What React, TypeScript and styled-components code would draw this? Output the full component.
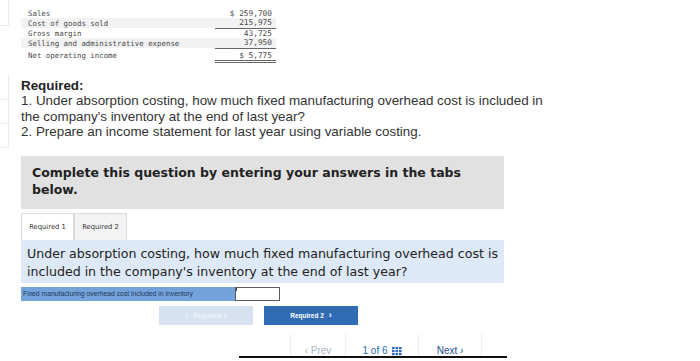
import React from 'react';
import styled, { createGlobalStyle } from 'styled-components';

const GlobalStyle = createGlobalStyle`
  html, body {
    margin: 0;
    padding: 0;
    background: #fff;
    overflow: hidden;
  }
`;

const Page = styled.div`
  display: flex;
  width: 700px;
  height: 361px;
  overflow: hidden;
`;

const Rail = styled.div`
  width: 9px;
  display: flex;
  flex-direction: column;
  flex-shrink: 0;
`;

const RailCell = styled.div<{ $h: number; $line?: boolean }>`
  height: ${(p) => p.$h}px;
  border-right: 1px solid ${(p) => (p.$line ? '#ececec' : 'transparent')};
  border-bottom: 1px solid ${(p) => (p.$line ? '#ececec' : 'transparent')};
`;

const Main = styled.div`
  flex: 1;
  padding-left: 12px;
  display: flex;
  flex-direction: column;
`;

const Statement = styled.table`
  width: 255px;
  margin-top: 8px;
  border-collapse: collapse;
  font-family: 'DejaVu Sans Mono', monospace;
  font-size: 7.4px;
  color: #4a4a4a;
`;

const Row = styled.tr<{ $shaded?: boolean }>`
  background: ${(p) => (p.$shaded ? '#f2f2f2' : 'transparent')};
  height: 10px;
`;

const TotalRow = styled.tr`
  height: 13px;
  td {
    padding-top: 2px;
  }
`;

const Label = styled.td`
  padding: 0 0 0 7px;
  line-height: 9px;
`;

const Amount = styled.td<{ $rule?: 'single' | 'double' }>`
  width: 57px;
  padding: 0 4px 0 0;
  text-align: right;
  line-height: 9px;
  font-size: 7.8px;
  border-bottom: ${(p) =>
    p.$rule === 'single' ? '1px solid #666' : p.$rule === 'double' ? '3px double #666' : 'none'};
`;

const Required = styled.div`
  margin-top: 15px;
  font-family: 'Liberation Sans', Arial, sans-serif;
  font-size: 13.4px;
  line-height: 15.5px;
  color: #333;
`;

const RequiredTitle = styled.div`
  font-weight: bold;
  color: #222;
`;

const Instruction = styled.div`
  margin-top: 16px;
  width: 483px;
  height: 53px;
  box-sizing: border-box;
  padding: 8px 11px;
  background: #e1e1e1;
  font-family: 'DejaVu Sans', Verdana, sans-serif;
  font-weight: bold;
  font-size: 12.5px;
  line-height: 17px;
  color: #222;
`;

const Tabs = styled.div`
  display: flex;
  margin-top: 4px;
  height: 27px;
`;

const Tab = styled.div<{ $active?: boolean }>`
  width: 53px;
  box-sizing: border-box;
  display: flex;
  align-items: center;
  justify-content: center;
  border: 1px solid #dcdcdc;
  border-bottom: none;
  background: ${(p) => (p.$active ? '#fff' : '#f3f3f3')};
  font-family: 'DejaVu Sans', Verdana, sans-serif;
  font-size: 6.8px;
  color: #333;
`;

const Question = styled.div`
  width: 483px;
  height: 43px;
  box-sizing: border-box;
  padding: 5px 6px;
  background: #dde9f6;
  font-family: 'DejaVu Sans', Verdana, sans-serif;
  font-size: 12.6px;
  line-height: 18px;
  color: #222;
`;

const AnswerRow = styled.div`
  display: flex;
  margin-top: 4px;
  height: 14px;
`;

const AnswerLabel = styled.div`
  width: 214px;
  box-sizing: border-box;
  padding-left: 2px;
  display: flex;
  align-items: center;
  background: #74a3dc;
  font-family: 'Liberation Sans', Arial, sans-serif;
  font-size: 6.8px;
  color: #23395a;
`;

const AnswerInput = styled.div`
  position: relative;
  width: 45px;
  box-sizing: border-box;
  border: 1px solid #5a5a5a;
  background: #fff;

  &::before {
    content: '';
    position: absolute;
    left: 0;
    top: 0;
    width: 1px;
    height: 3px;
    background: #444;
  }
`;

const ButtonRow = styled.div`
  display: flex;
  justify-content: center;
  gap: 11px;
  width: 483px;
  padding-right: 8px;
  box-sizing: border-box;
  margin-top: 5px;
`;

const NavButton = styled.div<{ $disabled?: boolean }>`
  width: 94px;
  height: 19px;
  display: flex;
  align-items: center;
  justify-content: center;
  gap: 5px;
  background: ${(p) => (p.$disabled ? '#d6e2f0' : '#2f6cb4')};
  color: ${(p) => (p.$disabled ? '#eef3f9' : '#fff')};
  font-family: 'Liberation Sans', Arial, sans-serif;
  font-weight: bold;
  font-size: 6.5px;
`;

const Chevron = styled.span`
  font-size: 9px;
  font-weight: bold;
`;

const Footer = styled.div`
  margin-top: 9px;
  margin-left: 218px;
  width: 268px;
  height: 22px;
  display: flex;
  border-bottom: 2px solid #111;
`;

const Pager = styled.div<{ $w: number; $color: string; $line?: boolean }>`
  width: ${(p) => p.$w}px;
  box-sizing: border-box;
  display: flex;
  align-items: flex-end;
  justify-content: center;
  gap: 4px;
  padding-bottom: 0;
  border-right: 1px solid ${(p) => (p.$line ? '#eeeeee' : 'transparent')};
  font-family: 'Liberation Sans', Arial, sans-serif;
  font-size: 10px;
  line-height: 10px;
  color: ${(p) => p.$color};
  white-space: nowrap;
`;

const GridIcon = () => (
  <svg width="10" height="9" viewBox="0 0 10 9">
    {[0, 1, 2].map((r) =>
      [0, 1, 2].map((c) => (
        <rect key={`${r}-${c}`} x={c * 3.5} y={r * 3} width="2.6" height="2.2" fill="#2d6cc0" />
      ))
    )}
  </svg>
);

const rows = [
  { label: 'Sales', value: '$ 259,700' },
  { label: 'Cost of goods sold', value: '215,975', shaded: true, rule: 'single' as const },
  { label: 'Gross margin', value: '43,725' },
  { label: 'Selling and administrative expense', value: '37,950', shaded: true, rule: 'single' as const },
];

export default function App() {
  return (
    <Page>
      <GlobalStyle />
      <Rail>
        <RailCell $h={25} $line />
        <RailCell $h={48} />
        <RailCell $h={24} $line />
        <RailCell $h={23} $line />
        <RailCell $h={23} $line />
      </Rail>
      <Main>
        <Statement>
          <tbody>
            {rows.map((r) => (
              <Row key={r.label} $shaded={r.shaded}>
                <Label>{r.label}</Label>
                <Amount $rule={r.rule}>{r.value}</Amount>
              </Row>
            ))}
            <TotalRow>
              <Label>Net operating income</Label>
              <Amount $rule="double">$ 5,775</Amount>
            </TotalRow>
          </tbody>
        </Statement>

        <Required>
          <RequiredTitle>Required:</RequiredTitle>
          <div>1. Under absorption costing, how much fixed manufacturing overhead cost is included in</div>
          <div>the company's inventory at the end of last year?</div>
          <div>2. Prepare an income statement for last year using variable costing.</div>
        </Required>

        <Instruction>Complete this question by entering your answers in the tabs below.</Instruction>

        <Tabs>
          <Tab $active>Required 1</Tab>
          <Tab>Required 2</Tab>
        </Tabs>

        <Question>
          Under absorption costing, how much fixed manufacturing overhead cost is included in the
          company's inventory at the end of last year?
        </Question>

        <AnswerRow>
          <AnswerLabel>Fixed manufacturing overhead cost included in inventory</AnswerLabel>
          <AnswerInput />
        </AnswerRow>

        <ButtonRow>
          <NavButton $disabled>
            <Chevron>‹</Chevron>Required 1
          </NavButton>
          <NavButton>
            Required 2<Chevron>›</Chevron>
          </NavButton>
        </ButtonRow>

        <Footer>
          <Pager $w={52} $color="#fff" $line />
          <Pager $w={55} $color="#a9b7c6" $line>
            ‹ Prev
          </Pager>
          <Pager $w={73} $color="#2a6ab8" $line>
            1 of 6 <GridIcon />
          </Pager>
          <Pager $w={63} $color="#1d4f8f" $line>
            Next ›
          </Pager>
          <Pager $w={25} $color="#fff" />
        </Footer>
      </Main>
    </Page>
  );
}
